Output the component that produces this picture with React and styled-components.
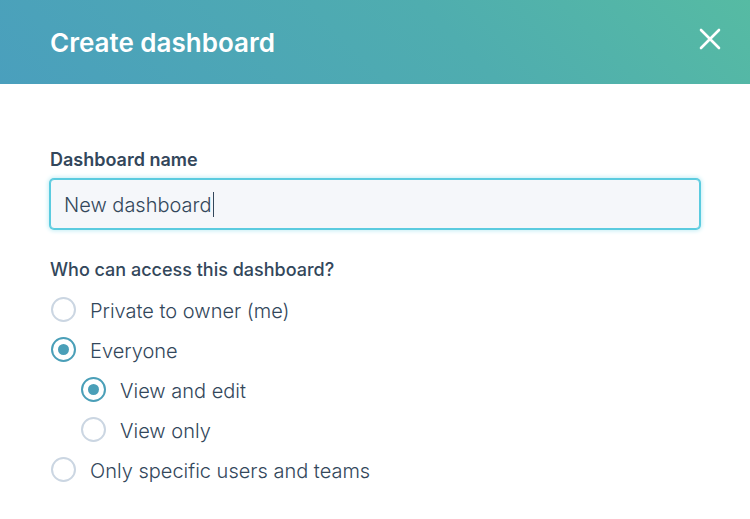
import React, { useState } from "react";
import styled, { createGlobalStyle } from "styled-components";

const accessOptions = [
  { id: "private", label: "Private to owner (me)" },
  {
    id: "everyone",
    label: "Everyone",
    children: [
      { id: "edit", label: "View and edit" },
      { id: "view", label: "View only" },
    ],
  },
  { id: "specific", label: "Only specific users and teams" },
];

export default function App() {
  const [name, setName] = useState("New dashboard");
  const [access, setAccess] = useState("everyone");
  const [permission, setPermission] = useState("edit");
  const [pristine, setPristine] = useState(true);

  return (
    <>
      <GlobalStyle />
      <Header>
        <Title>Create dashboard</Title>
        <CloseButton type="button" aria-label="Close">
          <svg width="22" height="22" viewBox="0 0 22 22" fill="none">
            <path
              d="M2 2L20 20M20 2L2 20"
              stroke="#fff"
              strokeWidth="2.6"
              strokeLinecap="round"
            />
          </svg>
        </CloseButton>
      </Header>
      <Form>
        <FieldLabel htmlFor="dashboard-name">Dashboard name</FieldLabel>
        <InputWrap>
          <TextInput
            id="dashboard-name"
            type="text"
            value={name}
            $pristine={pristine}
            onChange={(e) => {
              setPristine(false);
              setName(e.target.value);
            }}
          />
          {pristine && <Caret />}
        </InputWrap>
        <Fieldset>
          <Legend>Who can access this dashboard?</Legend>
          {accessOptions.map((option) => (
            <React.Fragment key={option.id}>
              <Option>
                <Radio
                  name="access"
                  checked={access === option.id}
                  onChange={() => setAccess(option.id)}
                />
                <OptionText>{option.label}</OptionText>
              </Option>
              {option.children &&
                access === option.id &&
                option.children.map((child) => (
                  <Option key={child.id} $nested>
                    <Radio
                      name="permission"
                      checked={permission === child.id}
                      onChange={() => setPermission(child.id)}
                    />
                    <OptionText>{child.label}</OptionText>
                  </Option>
                ))}
            </React.Fragment>
          ))}
        </Fieldset>
      </Form>
    </>
  );
}

const GlobalStyle = createGlobalStyle`
  * {
    box-sizing: border-box;
  }
  body {
    margin: 0;
    background: #fff;
    color: #33475b;
    font-family: Inter, "Open Sans", sans-serif;
  }
`;

const Header = styled.header`
  display: flex;
  align-items: center;
  justify-content: space-between;
  height: 84px;
  padding: 0 24px 0 50px;
  background: linear-gradient(45deg, #4a9fbd, #4fadaf 60%, #56bba3);
`;

const Title = styled.h1`
  margin: 0;
  padding-top: 2px;
  color: #fff;
  font-size: 26px;
  font-weight: 600;
  line-height: 32px;
`;

const CloseButton = styled.button`
  display: flex;
  margin-bottom: 6px;
  padding: 5px;
  border: 0;
  background: none;
  cursor: pointer;
`;

const Form = styled.form`
  padding: 64px 50px 24px;
`;

const FieldLabel = styled.label`
  display: block;
  font-size: 18px;
  font-weight: 600;
  line-height: 24px;
`;

const InputWrap = styled.div`
  position: relative;
  margin-top: 7px;
`;

const TextInput = styled.input`
  display: block;
  width: 100%;
  height: 50px;
  padding: 2px 13px 0;
  border: 1px solid #5bcbdf;
  border-radius: 4px;
  outline: none;
  background: #f5f7fa;
  box-shadow: 0 0 0 1px #5bcbdf, 0 0 4px 2px #c5eef5;
  color: #33475b;
  caret-color: ${({ $pristine }) => ($pristine ? "transparent" : "#33475b")};
  font-family: inherit;
  font-size: 20px;
  font-weight: 300;
`;

const Caret = styled.span`
  position: absolute;
  top: 13px;
  left: 163px;
  width: 1px;
  height: 25px;
  background: #33475b;
  pointer-events: none;
`;

const Fieldset = styled.fieldset`
  min-width: 0;
  margin: 29px 0 0;
  padding: 0;
  border: 0;
`;

const Legend = styled.legend`
  margin-bottom: 7px;
  padding: 0;
  font-size: 18px;
  font-weight: 500;
  line-height: 24px;
`;

const Option = styled.label`
  display: flex;
  align-items: center;
  gap: 14px;
  height: 40px;
  padding-left: ${({ $nested }) => ($nested ? "31px" : "1px")};
  cursor: pointer;
`;

const OptionText = styled.span`
  padding-top: 4px;
  font-size: 20px;
  font-weight: 300;
  line-height: 26px;
`;

const Radio = styled.input.attrs({ type: "radio" })`
  display: grid;
  place-content: center;
  flex: none;
  width: 25px;
  height: 25px;
  margin: 0;
  border: 2px solid #cbd6e2;
  border-radius: 50%;
  background: #fff;
  appearance: none;

  &:checked {
    border-color: #4a9fb8;
  }

  &:checked::before {
    width: 11px;
    height: 11px;
    border-radius: 50%;
    background: #4a9fb8;
    content: "";
  }
`;
